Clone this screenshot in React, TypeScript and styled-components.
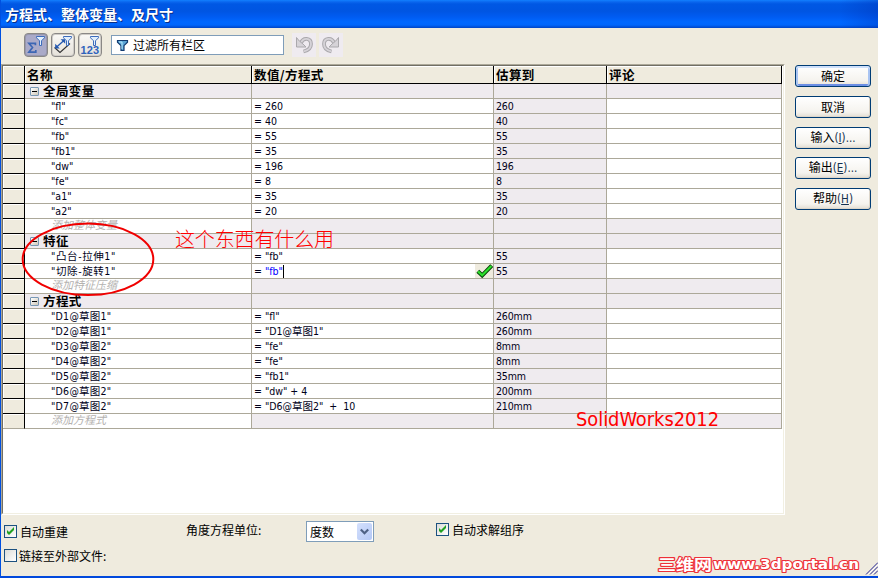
import React from "react";
import styled, { createGlobalStyle, css } from "styled-components";

const latin = `"DejaVu Sans Condensed", "DejaVu Sans"`;
const cjk = `"Noto Sans CJK SC"`;

const GlobalStyle = createGlobalStyle`
  body { margin: 0; background: #efebde; overflow: hidden; }
  * { box-sizing: border-box; }
`;

const Window = styled.div`
  position: relative;
  width: 878px;
  height: 578px;
  display: flex;
  flex-direction: column;
  background: #efebde;
  border-left: 1px solid #0050e0;
  border-bottom: 2px solid #0048dc;
  font: 12px/15px ${cjk}, sans-serif;
  color: #000;
  overflow: hidden;
`;

const TitleBar = styled.header`
  flex: none;
  height: 28px;
  margin-left: -1px;
  padding-left: 5px;
  background: linear-gradient(90deg, transparent 840px, rgba(0, 40, 170, 0.3) 878px),
    linear-gradient(#1280ff 0, #0a66ee 2px, #0058e4 4px, #0055e2 11px, #005cf2 17px, #0068ff 22px, #0066fc 25px, #0050d8 27px, #0044c4 28px);
  color: #fff;
  font: bold 14px/28px ${cjk}, sans-serif;
  text-shadow: 1px 1px 0 #0a2f86;
  white-space: nowrap;
`;

const Content = styled.div`
  display: flex;
  height: 487px;
`;

const Main = styled.main`
  width: 784px;
`;

const Toolbar = styled.div`
  height: 36px;
  padding: 5px 0 0 23px;
  display: flex;
  align-items: flex-start;
`;

const ToolButton = styled.button<{ $pressed?: boolean }>`
  width: 24px;
  height: 24px;
  margin-right: 3px;
  padding: 0;
  border: 1px solid #8a8886;
  border-radius: 4px;
  background: ${(p) => (p.$pressed ? "#aaaac8" : "linear-gradient(#faf9f6, #e6e2da)")};
  box-shadow: inset 0 0 0 1px ${(p) => (p.$pressed ? "#9797ae" : "#d0cdc8")};
  svg { display: block; }
`;

const SearchBox = styled.div`
  width: 173px;
  height: 20px;
  margin: 2px 8px 0 6px;
  padding-left: 4px;
  display: flex;
  align-items: center;
  gap: 4px;
  border: 1px solid #7f9db9;
  background: #fff;
  line-height: 16px;
  padding-bottom: 1px;
`;

const HistoryButton = styled.button`
  width: 24px;
  height: 24px;
  margin-right: 3px;
  padding: 0;
  border: 0;
  background: #efebf0;
  svg { display: block; }
`;

const GridPanel = styled.div`
  height: 451px;
  border-style: solid;
  border-width: 1px;
  border-color: #aca899 #fff #fff #aca899;
`;

const GridInner = styled.div`
  height: 449px;
  border-style: solid;
  border-width: 1px;
  border-color: #716f64 #f1efe2 #f1efe2 #716f64;
  background: #fff;
`;

const columns = css`
  display: grid;
  grid-template-columns: 22px 227px 242px 113px 175px;
`;

const HeaderRow = styled.div`
  ${columns}
  height: 18px;
`;

const HeaderCell = styled.div`
  padding-left: 2px;
  border-right: 1px solid #000;
  border-bottom: 1px solid #000;
  background: #efebde;
  box-shadow: inset 1px 1px 0 #fff;
  font-weight: bold;
  font-size: 12.5px;
  line-height: 17px;
  letter-spacing: 0.4px;
  white-space: nowrap;
`;

const GridRow = styled.div`
  ${columns}
  height: 15px;
  &:last-child > :first-child { border-bottom-color: #aca899; }
`;

const Gutter = styled.div`
  border-right: 1px solid #000;
  border-bottom: 1px solid #000;
  background: #efebde;
  box-shadow: inset 1px 1px 0 #fff;
`;

const Cell = styled.div<{ $shade?: boolean; $indent?: number }>`
  display: flex;
  align-items: center;
  height: 15px;
  padding-left: ${(p) => p.$indent ?? 2}px;
  border-right: 1px solid #aca899;
  border-bottom: 1px solid #aca899;
  background: ${(p) => (p.$shade ? "#efebef" : "#fff")};
  line-height: 14px;
  white-space: pre;
`;

const Value = styled.span<{ $blue?: boolean; $tracking?: number }>`
  font: 10.5px/14px ${latin}, ${cjk}, sans-serif;
  letter-spacing: ${(p) => p.$tracking ?? 0}px;
  color: ${(p) => (p.$blue ? "#0000ff" : "#000018")};
`;

const Result = styled(Value)`
  padding-top: 1px;
  line-height: 13px;
  letter-spacing: -0.15px;
`;

const GroupName = styled.span`
  margin-left: 4px;
  font-weight: bold;
  font-size: 12.5px;
  line-height: 14px;
  letter-spacing: 0.4px;
`;

const Placeholder = styled.span`
  margin-top: -3px;
  color: #b4b2b0;
  font-size: 11px;
  line-height: 11px;
  font-style: italic;
`;

const Toggle = styled.span`
  position: relative;
  width: 9px;
  height: 9px;
  border: 1px solid #7898b5;
  border-radius: 1px;
  background: linear-gradient(135deg, #fff, #d0c8b8);
  &::after {
    content: "";
    position: absolute;
    left: 1px;
    top: 3px;
    width: 5px;
    height: 1px;
    background: #000;
  }
`;

const Caret = styled.span`
  width: 1px;
  height: 13px;
  background: #000;
`;

const Accept = styled.span`
  width: 18px;
  height: 14px;
  margin-left: auto;
  background: #efebde;
  svg { display: block; }
`;

const Actions = styled.aside`
  padding: 37px 0 0 10px;
  display: grid;
  grid-template-rows: 31px 31px 30px 31px 31px;
`;

const ActionButton = styled.button<{ $primary?: boolean }>`
  width: 76px;
  height: 22px;
  padding: 0 0 1px;
  border: 1px solid #003c74;
  border-radius: 3px;
  background: linear-gradient(#fff, #f5f3ee 75%, #e2ddd2);
  box-shadow: ${(p) => (p.$primary ? "inset 0 2px 0 #cee0fb, inset 2px 0 0 #a9c4f2, inset -2px 0 0 #a9c4f2, inset 0 -2px 0 #6c8fe4" : "inset -1px -1px 0 #ddd6ca")};
  font: 12px/18px ${cjk}, sans-serif;
  color: #000;
  white-space: nowrap;
`;

const Shortcut = styled.span`
  font: 11.5px/18px ${latin}, sans-serif;
  color: #14304e;
  u { text-underline-offset: 1px; }
`;

const Footer = styled.footer`
  display: grid;
  grid-template-columns: 182px 120px 130px 1fr;
  padding-left: 3px;
`;

const CheckColumn = styled.div<{ $top: number }>`
  padding-top: ${(p) => p.$top}px;
  display: flex;
  flex-direction: column;
  gap: 11px;
`;

const CheckLabel = styled.label<{ $gap: number }>`
  display: flex;
  align-items: center;
  gap: ${(p) => p.$gap}px;
  height: 13px;
  white-space: nowrap;
`;

const CheckBox = styled.span`
  width: 13px;
  height: 13px;
  border: 1px solid #1c5180;
  background: linear-gradient(135deg, #dcdcd7, #fff);
  svg { display: block; }
`;

const UnitLabel = styled.div`
  padding-top: 7px;
  white-space: nowrap;
`;

const Select = styled.div`
  width: 68px;
  height: 21px;
  margin-top: 6px;
  padding: 1px 1px 1px 3px;
  display: flex;
  justify-content: space-between;
  border: 1px solid #7f9db9;
  background: #fff;
  line-height: 18px;
`;

const SelectArrow = styled.span`
  width: 15px;
  height: 17px;
  border-radius: 2px;
  background: linear-gradient(135deg, #d4e0fc, #b4c8f6);
  svg { display: block; }
`;

const Overlay = styled.svg`
  position: absolute;
  left: -1px;
  top: 0;
  pointer-events: none;
`;

const Funnel = ({ x, y, bright }: { x: number; y: number; bright?: boolean }) => (
  <g transform={`translate(${x} ${y})`}>
    <path
      d={bright ? "M.5.5h10v1.7L7 5.7v4.8H4V5.7L.5 2.2Z" : "M.5.5h8v1.3L5.5 4.8v4.7h-2V4.8L.5 1.8Z"}
      fill={bright ? "#5aa4d4" : "#e2effc"}
      stroke={bright ? "#123a70" : "#3c6cbc"}
      strokeWidth={bright ? 1.2 : 1}
    />
    {bright && <path d="M2 2h3L5 5v4" fill="none" stroke="#b9edff" strokeWidth="1" />}
  </g>
);

const Tick = () => (
  <svg width="11" height="11" viewBox="0 0 11 11">
    <path d="M2 4v3l2 2 5-5V1L4 6Z" fill="#21a121" />
  </svg>
);

const SigmaIcon = () => (
  <svg width="22" height="22" viewBox="0 0 22 22">
    <path d="M10.4 11.2V9.3H3.9l3.6 4.2-3.6 4.7h6.9v-2.2" fill="none" stroke="#3c66b4" strokeWidth="1.7" />
    <Funnel x={11} y={2} />
  </svg>
);

const DimensionIcon = () => (
  <svg width="22" height="22" viewBox="0 0 22 22">
    <path d="M2.5 13.5l5.5 5 10-9" fill="none" stroke="#333" strokeWidth="1.1" />
    <path d="M3.5 14l9-8" stroke="#2458b0" strokeWidth="1.3" />
    <path d="M3.2 9.8v4.6h4.6ZM8.6 5.2h4.6v4.6Z" fill="#2458b0" />
    <Funnel x={11} y={2} />
  </svg>
);

const NumberIcon = () => (
  <svg width="22" height="22" viewBox="0 0 22 22">
    <Funnel x={11} y={2} />
    <text x="1.5" y="20" fontFamily="Liberation Sans" fontSize="11" fontWeight="bold" fill="#2f63bd" textLength="18.5">
      123
    </text>
  </svg>
);

const HistoryIcon = ({ flip }: { flip?: boolean }) => (
  <svg width="24" height="24" viewBox="0 0 24 24">
    <g transform={flip ? "translate(24 0) scale(-1 1)" : undefined}>
      <path d="M9 10C11 4 19 4.500 19 11c0 4-3 6.500-7.500 7.500" fill="none" stroke="#aaa8ac" strokeWidth="3.8" />
      <path d="M9 10C11 4 19 4.500 19 11c0 4-3 6.500-7.200 7.400" fill="none" stroke="#d6d3d8" strokeWidth="1.800" />
      <path d="M4.500 4.500v9.500h9.500l-3-3L7.300 8Z" fill="#d6d3d8" stroke="#aaa8ac" />
    </g>
  </svg>
);

type Line = {
  kind: "group" | "item" | "add";
  name: string;
  tracking?: number;
  value?: string;
  result?: string;
  editing?: boolean;
};

const item = (name: string, value: string, result: string, tracking = 0, editing = false): Line => ({
  kind: "item",
  name: `"${name}"`,
  tracking,
  value,
  result,
  editing,
});

const lines: Line[] = [
  { kind: "group", name: "全局变量" },
  item("fl", "260", "260"),
  item("fc", "40", "40"),
  item("fb", "55", "55"),
  item("fb1", "35", "35"),
  item("dw", "196", "196"),
  item("fe", "8", "8"),
  item("a1", "35", "35"),
  item("a2", "20", "20"),
  { kind: "add", name: "添加整体变量" },
  { kind: "group", name: "特征" },
  item("凸台-拉伸1", '"fb"', "55", 0.6),
  item("切除-旋转1", '"fb"', "55", 0.6, true),
  { kind: "add", name: "添加特征压缩" },
  { kind: "group", name: "方程式" },
  item("D1@草图1", '"fl"', "260mm", 0.25),
  item("D2@草图1", '"D1@草图1"', "260mm", 0.25),
  item("D3@草图2", '"fe"', "8mm", 0.25),
  item("D4@草图2", '"fe"', "8mm", 0.25),
  item("D5@草图2", '"fb1"', "35mm", 0.25),
  item("D6@草图2", '"dw" + 4', "200mm", 0.25),
  item("D7@草图2", '"D6@草图2"  +  10', "210mm", 0.25),
  { kind: "add", name: "添加方程式" },
];

const Row = ({ line }: { line: Line }) => {
  if (line.kind === "item") {
    return (
      <GridRow>
        <Gutter />
        <Cell $indent={26}>
          <Value $tracking={line.tracking}>{line.name}</Value>
        </Cell>
        <Cell>
          <Value>= </Value>
          <Value $blue={line.editing}>{line.value}</Value>
          {line.editing && (
            <>
              <Caret />
              <Accept>
                <svg width="18" height="14" viewBox="0 0 18 14">
                  <path d="M2.800 7.200l4.400 4.200 9.500-9.800" fill="none" stroke="#063f06" strokeWidth="4" />
                  <path d="M3 7.400l4.200 3.900 9.200-9.400" fill="none" stroke="#2be02b" strokeWidth="2.200" />
                </svg>
              </Accept>
            </>
          )}
        </Cell>
        <Cell $shade>
          <Result>{line.result}</Result>
        </Cell>
        <Cell />
      </GridRow>
    );
  }
  const group = line.kind === "group";
  return (
    <GridRow>
      <Gutter />
      <Cell $shade={group} $indent={group ? 5 : 26}>
        {group && <Toggle />}
        {group ? <GroupName>{line.name}</GroupName> : <Placeholder>{line.name}</Placeholder>}
      </Cell>
      <Cell $shade />
      <Cell $shade />
      <Cell $shade />
    </GridRow>
  );
};

export default function App() {
  return (
    <>
      <GlobalStyle />
      <Window>
        <TitleBar>方程式、整体变量、及尺寸</TitleBar>
        <Content>
          <Main>
            <Toolbar>
              <ToolButton $pressed><SigmaIcon /></ToolButton>
              <ToolButton><DimensionIcon /></ToolButton>
              <ToolButton><NumberIcon /></ToolButton>
              <SearchBox>
                <svg width="13" height="12" viewBox="0 0 13 12"><Funnel x={1} y={1} bright /></svg>
                <span>过滤所有栏区</span>
              </SearchBox>
              <HistoryButton><HistoryIcon /></HistoryButton>
              <HistoryButton><HistoryIcon flip /></HistoryButton>
            </Toolbar>
            <GridPanel>
              <GridInner>
                <HeaderRow>
                  <HeaderCell />
                  <HeaderCell>名称</HeaderCell>
                  <HeaderCell>数值/方程式</HeaderCell>
                  <HeaderCell>估算到</HeaderCell>
                  <HeaderCell>评论</HeaderCell>
                </HeaderRow>
                <div>
                  {lines.map((line, i) => <Row key={i} line={line} />)}
                </div>
              </GridInner>
            </GridPanel>
          </Main>
          <Actions>
            <ActionButton $primary>确定</ActionButton>
            <ActionButton>取消</ActionButton>
            <ActionButton>输入<Shortcut>(<u>I</u>)...</Shortcut></ActionButton>
            <ActionButton>输出<Shortcut>(<u>E</u>)...</Shortcut></ActionButton>
            <ActionButton>帮助<Shortcut>(<u>H</u>)</Shortcut></ActionButton>
          </Actions>
        </Content>
        <Footer>
          <CheckColumn $top={10}>
            <CheckLabel $gap={3}><CheckBox><Tick /></CheckBox>自动重建</CheckLabel>
            <CheckLabel $gap={2}><CheckBox />链接至外部文件:</CheckLabel>
          </CheckColumn>
          <UnitLabel>角度方程单位:</UnitLabel>
          <Select>
            度数
            <SelectArrow>
              <svg width="15" height="17" viewBox="0 0 15 17">
                <path d="M3.800 6.500l3.700 3.700 3.700-3.700" fill="none" stroke="#4d6185" strokeWidth="2.200" />
              </svg>
            </SelectArrow>
          </Select>
          <CheckColumn $top={8}>
            <CheckLabel $gap={3}><CheckBox><Tick /></CheckBox>自动求解组序</CheckLabel>
          </CheckColumn>
        </Footer>
        <Overlay width="878" height="578" viewBox="0 0 878 578">
          <ellipse cx="88" cy="259.3" rx="65.3" ry="35.7" fill="none" stroke="#f00000" strokeWidth="2" />
          <text x="175" y="247" fontFamily="Noto Sans CJK SC" fontSize="20" fontWeight="300" fill="#ff0000" textLength="159">
            这个东西有什么用
          </text>
          <text x="576" y="426" fontFamily="DejaVu Sans Condensed, DejaVu Sans" fontSize="19.5" fill="#ff0000" textLength="143" lengthAdjust="spacingAndGlyphs">
            SolidWorks2012
          </text>
          <g fill="#fff" stroke="#ee3038" strokeWidth="2.2" strokeLinejoin="round" paintOrder="stroke">
            <text x="658" y="570" fontFamily="Noto Sans CJK SC" fontSize="15" fontWeight="bold" textLength="54" lengthAdjust="spacingAndGlyphs">
              三维网
            </text>
            <text x="713" y="569" fontFamily="DejaVu Sans" fontSize="13.5" fontWeight="bold" textLength="146" lengthAdjust="spacingAndGlyphs">
              www.3dportal.cn
            </text>
          </g>
          <path d="M866 574.5l12-12M870 574.5l8-8M874 574.5l4-4" stroke="#202090" strokeWidth="1" />
          <path d="M868 574.5l10-10M872 574.5l6-6" stroke="#fff" strokeWidth="1" />
        </Overlay>
      </Window>
    </>
  );
}
